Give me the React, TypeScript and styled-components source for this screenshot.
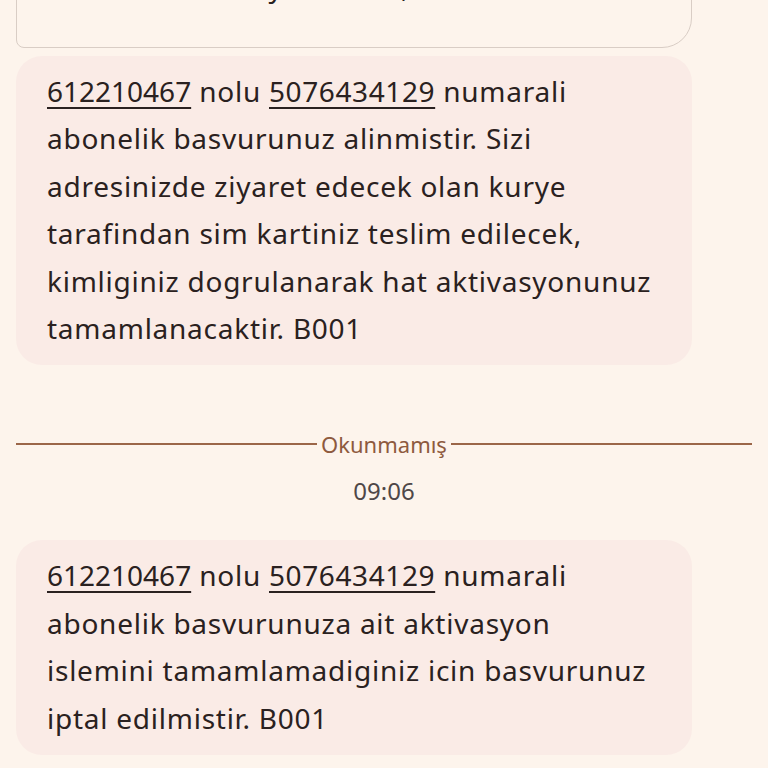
import React from "react";
import styled, { createGlobalStyle } from "styled-components";

const GlobalStyle = createGlobalStyle`
  html, body {
    margin: 0;
    padding: 0;
    background: #fdf4ec;
  }
  body {
    font-family: "Noto Sans", "Open Sans", sans-serif;
    color: #2a2120;
  }
`;

const Page = styled.div`
  width: 768px;
  height: 768px;
  overflow: hidden;
  display: flex;
  flex-direction: column;
  background: #fdf4ec;
`;

const QuotedCard = styled.div`
  margin: -60px 0 0 16px;
  width: 676px;
  height: 108px;
  box-sizing: border-box;
  border: 1.5px solid #d9cdc5;
  border-radius: 8px 8px 30px 8px;
  padding: 22px 30px 0;
  font-size: 28px;
  line-height: 47px;
  letter-spacing: 0.7px;
  color: #2a2120;
  overflow: hidden;
  white-space: nowrap;
`;

const Bubble = styled.div<{ $top: number }>`
  margin: ${({ $top }) => $top}px 0 0 16px;
  width: 676px;
  box-sizing: border-box;
  padding: 12px 10px 13px 31px;
  background: #faebe6;
  border-radius: 26px;
  font-size: 28px;
  line-height: 47.4px;
  letter-spacing: 0.75px;
`;

const Line = styled.div`
  white-space: nowrap;
`;

const Num = styled.span<{ $spacing: number }>`
  letter-spacing: ${({ $spacing }) => $spacing}px;
  text-decoration: underline;
  text-decoration-thickness: 2px;
  text-underline-offset: 5px;
`;

const Divider = styled.div`
  margin: 62px 16px 0 16px;
  display: flex;
  align-items: center;
  gap: 4px;
  color: #8e5a3e;
  font-size: 22px;
  line-height: 34px;
  &::before,
  &::after {
    content: "";
    flex: 1;
    height: 2px;
    background: #9b6649;
  }
`;

const Time = styled.div`
  margin-top: 16px;
  text-align: center;
  color: #4f4747;
  font-size: 24px;
  line-height: 28px;
`;

const firstMsg = [
  "abonelik basvurunuz alinmistir. Sizi",
  "adresinizde ziyaret edecek olan kurye",
  "tarafindan sim kartiniz teslim edilecek,",
  "kimliginiz dogrulanarak hat aktivasyonunuz",
  "tamamlanacaktir. B001",
];

const secondMsg = [
  "abonelik basvurunuza ait aktivasyon",
  "islemini tamamlamadiginiz icin basvurunuz",
  "iptal edilmistir. B001",
];

const Message = ({ lines, top }: { lines: string[]; top: number }) => (
  <Bubble $top={top}>
    <Line>
      <Num $spacing={0}>612210467</Num> nolu{" "}
      <Num $spacing={0.6}>5076434129</Num> numarali
    </Line>
    {lines.map((l) => (
      <Line key={l}>{l}</Line>
    ))}
  </Bubble>
);

export default function App() {
  return (
    <Page>
      <GlobalStyle />
      <QuotedCard>
        <Line>basvurunuz onaylanmistir, tesekkür ederiz</Line>
      </QuotedCard>
      <Message top={8} lines={firstMsg} />
      <Divider>Okunmamış</Divider>
      <Time>09:06</Time>
      <Message top={35} lines={secondMsg} />
    </Page>
  );
}
